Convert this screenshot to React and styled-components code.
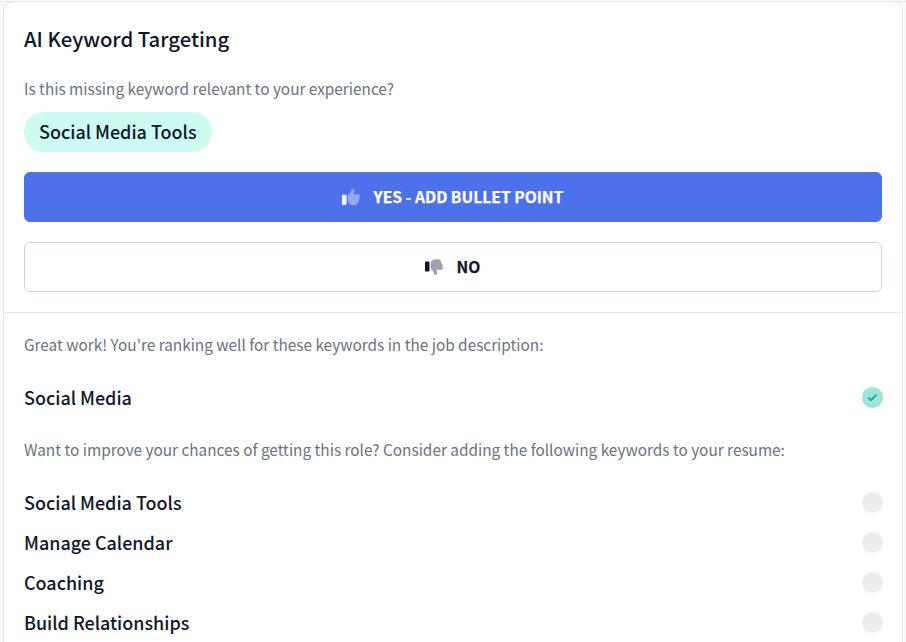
import React from "react";
import styled, { createGlobalStyle } from "styled-components";

const GlobalStyle = createGlobalStyle`
  body {
    margin: 0;
    padding-top: 1px;
    background: #fafafa;
    color: #0f172a;
    font-family: "Source Sans Pro", "Noto Sans CJK SC", "Noto Sans", sans-serif;
  }
`;

const Page = styled.div`
  box-sizing: border-box;
  height: 641px;
  padding: 0 3px;
  border-top: 1px solid #e2e8f0;
  overflow: hidden;
`;

const Card = styled.main`
  box-sizing: border-box;
  width: 900px;
  height: 700px;
  margin-top: -1px;
  background: #fff;
  border: 1px solid #e2e8f0;
  border-radius: 10px;
`;

const Section = styled.section`
  display: flex;
  flex-direction: column;
  padding: ${(p) => p.$padding};
  border-bottom: ${(p) => (p.$divided ? "1px solid #e2e8f0" : "none")};
`;

const Title = styled.h1`
  margin: 0 0 19px;
  padding-bottom: 2px;
  font-size: 20.3px;
  font-weight: 500;
  line-height: 34px;
`;

const Text = styled.p`
  margin: 0;
  padding-bottom: 2px;
  color: #6b7280;
  font-size: 15.35px;
  line-height: 24px;
`;

const Pill = styled.span`
  align-self: flex-start;
  margin: 10px 0 20px;
  padding: 0 15px 2px;
  border-radius: 20px;
  background: #ccfbf1;
  font-size: 17.95px;
  font-weight: 500;
  line-height: 38px;
`;

const Button = styled.button`
  display: flex;
  align-items: center;
  justify-content: center;
  gap: 14px;
  box-sizing: border-box;
  height: 50px;
  margin-bottom: 20px;
  padding: 0 1px 0 0;
  border: 1px solid ${(p) => (p.$primary ? "#4c71eb" : "#cbd5e1")};
  border-radius: 6px;
  background: ${(p) => (p.$primary ? "#4c71eb" : "#fff")};
  color: ${(p) => (p.$primary ? "#fff" : "#0f172a")};
  font-family: inherit;
  font-size: 15.65px;
  font-weight: 700;
  line-height: 24px;
  -webkit-text-stroke: 0.25px currentColor;
`;

const List = styled.ul`
  margin: ${(p) => p.$margin};
  padding: 0;
  list-style: none;
`;

const Item = styled.li`
  display: flex;
  align-items: center;
  justify-content: space-between;
  height: 38px;
  padding-bottom: 2px;
  font-size: 17.95px;
  font-weight: 500;
  line-height: 38px;
`;

const Status = styled.span`
  display: flex;
  align-items: center;
  justify-content: center;
  width: 21px;
  height: 21px;
  margin-top: 1px;
  border-radius: 50%;
  background: ${(p) => (p.$done ? "#a0e3d9" : "#ededed")};
`;

const ThumbsUp = () => (
  <svg width="18" height="18" viewBox="0 0 512 512" fill="currentColor">
    <path
      opacity=".4"
      d="M313.4 32.9c26 5.2 42.9 30.5 37.7 56.5l-2.3 11.4c-5.3 26.7-15.1 52.1-28.8 75.2H464c26.5 0 48 21.5 48 48c0 18.5-10.5 34.6-25.9 42.6C497 275.4 504 288.9 504 304c0 23.4-16.8 42.9-38.9 47.1c4.4 7.3 6.9 15.8 6.9 24.9c0 21.3-13.9 39.4-33.1 45.6c.7 3.3 1.1 6.8 1.1 10.4c0 26.5-21.5 48-48 48H294.5c-19 0-37.5-5.6-53.3-16.1l-38.5-25.7C176 420.4 160 390.4 160 358.3V247.1c0-29.2 13.3-56.7 36-75l7.4-5.9c26.5-21.2 44.6-51 51.2-84.2l2.3-11.4c5.2-26 30.5-42.9 56.5-37.7z"
    />
    <path d="M32 192h64c17.7 0 32 14.3 32 32v224c0 17.7-14.3 32-32 32H32c-17.7 0-32-14.3-32-32V224c0-17.7 14.3-32 32-32z" />
  </svg>
);

const ThumbsDown = () => (
  <svg width="18" height="18" viewBox="0 0 512 512" fill="currentColor">
    <path
      opacity=".4"
      d="M313.4 479.1c26-5.2 42.9-30.5 37.7-56.5l-2.3-11.4c-5.3-26.7-15.1-52.1-28.8-75.2H464c26.5 0 48-21.5 48-48c0-18.5-10.5-34.6-25.9-42.6C497 236.6 504 223.1 504 208c0-23.4-16.8-42.9-38.9-47.1c4.4-7.3 6.9-15.8 6.9-24.9c0-21.3-13.9-39.4-33.1-45.6c.7-3.3 1.1-6.8 1.1-10.4c0-26.5-21.5-48-48-48H294.5c-19 0-37.5 5.6-53.3 16.1L202.7 73.8C176 91.6 160 121.6 160 153.7v111.2c0 29.2 13.3 56.7 36 75l7.4 5.9c26.5 21.2 44.6 51 51.2 84.2l2.3 11.4c5.2 26 30.5 42.9 56.5 37.7z"
    />
    <path d="M32 384h64c17.7 0 32-14.3 32-32V128c0-17.7-14.3-32-32-32H32C14.3 96 0 110.3 0 128v224c0 17.7 14.3 32 32 32z" />
  </svg>
);

const Check = () => (
  <svg width="11" height="9" viewBox="0 0 11 9" fill="none">
    <path d="M1.3 4.5 4 7.1 9.4 1.7" stroke="#14b8a6" strokeWidth="2" />
  </svg>
);

const ranked = ["Social Media"];
const missing = ["Social Media Tools", "Manage Calendar", "Coaching", "Build Relationships"];

const KeywordList = ({ keywords, done, margin }) => (
  <List $margin={margin}>
    {keywords.map((word) => (
      <Item key={word}>
        {word}
        <Status $done={done}>{done && <Check />}</Status>
      </Item>
    ))}
  </List>
);

const App = () => (
  <Page>
    <GlobalStyle />
    <Card>
      <Section $divided $padding="19px 20px 0">
        <Title>AI Keyword Targeting</Title>
        <Text>Is this missing keyword relevant to your experience?</Text>
        <Pill>Social Media Tools</Pill>
        <Button type="button" $primary>
          <ThumbsUp />
          YES - ADD BULLET POINT
        </Button>
        <Button type="button">
          <ThumbsDown />
          NO
        </Button>
      </Section>
      <Section $padding="19px 19px 0 20px">
        <Text>Great work! You're ranking well for these keywords in the job description:</Text>
        <KeywordList keywords={ranked} done margin="20px 0 19px" />
        <Text>
          Want to improve your chances of getting this role? Consider adding the following keywords to your resume:
        </Text>
        <KeywordList keywords={missing} margin="20px 0 0" />
      </Section>
    </Card>
  </Page>
);

export default App;
